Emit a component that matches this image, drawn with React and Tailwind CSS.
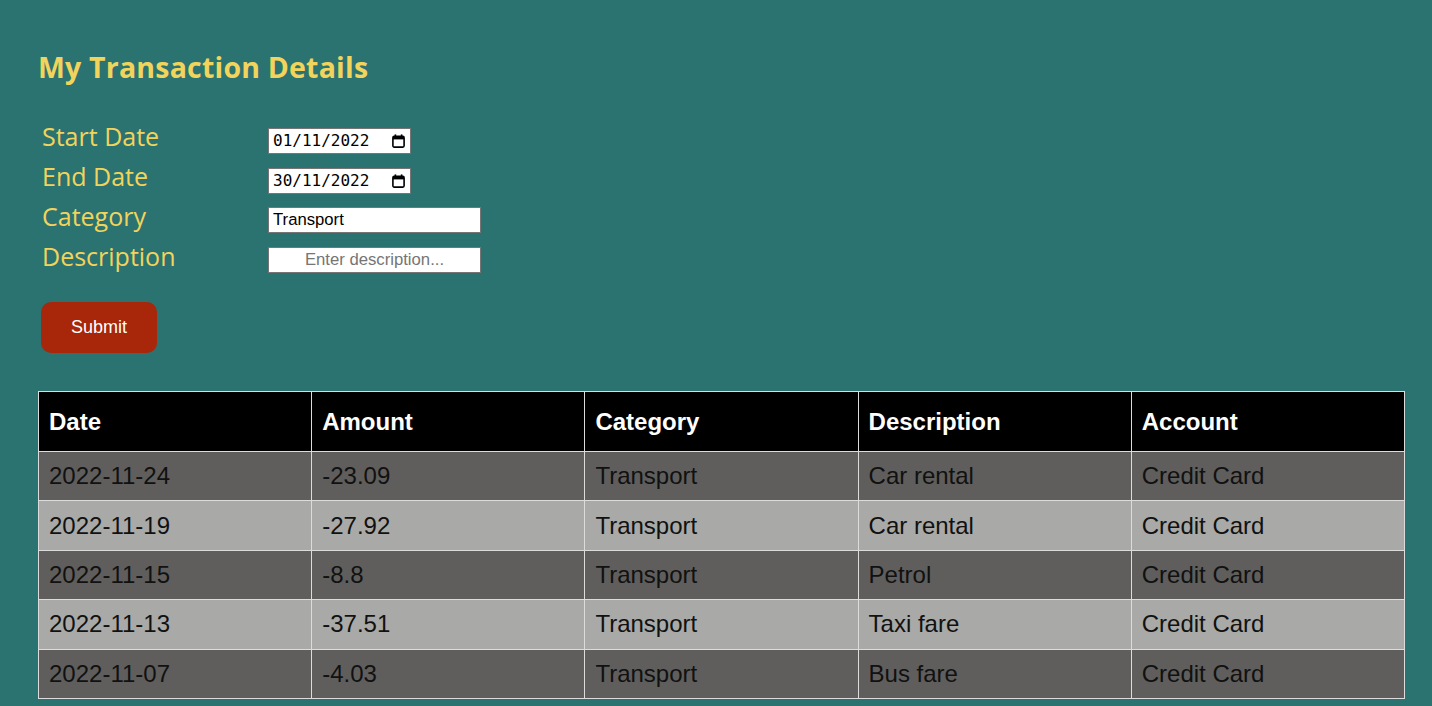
import React from "react";

const rows = [
  ["2022-11-24", "-23.09", "Transport", "Car rental", "Credit Card"],
  ["2022-11-19", "-27.92", "Transport", "Car rental", "Credit Card"],
  ["2022-11-15", "-8.8", "Transport", "Petrol", "Credit Card"],
  ["2022-11-13", "-37.51", "Transport", "Taxi fare", "Credit Card"],
  ["2022-11-07", "-4.03", "Transport", "Bus fare", "Credit Card"],
];

function CalIcon() {
  return (
    <svg width="13" height="14" viewBox="0 0 13 14" className="shrink-0">
      <rect x="0.9" y="2.4" width="11.2" height="10.7" rx="1.3" fill="none" stroke="#000" strokeWidth="1.6" />
      <rect x="1" y="2.4" width="11" height="3" fill="#000" />
      <rect x="2.6" y="0.4" width="1.6" height="3" fill="#000" />
      <rect x="8.8" y="0.4" width="1.6" height="3" fill="#000" />
    </svg>
  );
}

function DateBox({ value }) {
  return (
    <div className="flex items-center justify-between w-[143px] h-[26px] bg-white border border-[#767676] pl-[4px] pr-[5px] text-[16px] text-black" style={{ fontFamily: '"DejaVu Sans Mono", "Liberation Mono", monospace' }}>
      <span className="leading-[16px]">{value}</span>
      <CalIcon />
    </div>
  );
}

export default function App() {
  const labelFont = { fontFamily: '"Open Sans", "Noto Sans", sans-serif' };
  return (
    <div className="min-h-[706px] bg-[#2a7371] pl-[38px] pt-[46px] pb-[8px]" style={{ fontFamily: '"Liberation Sans", Arial, sans-serif' }}>
      <h1 className="text-[28.5px] font-bold leading-[42px] text-[#f2d45c] tracking-[0.2px]" style={{ fontFamily: '"Open Sans", "Noto Sans", sans-serif' }}>
        My Transaction Details
      </h1>
      <div className="mt-[29px] pl-[4px] grid grid-cols-[226px_auto] auto-rows-[40px] text-[#f2d45c] text-[25px]" style={labelFont}>
        <div className="leading-[40px] -mt-[1px]">Start Date</div>
        <div className="flex items-center pt-[8px]"><DateBox value="01/11/2022" /></div>
        <div className="leading-[40px] -mt-[1px]">End Date</div>
        <div className="flex items-center pt-[8px]"><DateBox value="30/11/2022" /></div>
        <div className="leading-[40px] -mt-[1px]">Category</div>
        <div className="flex items-center pt-[6px]">
          <input readOnly value="Transport" className="w-[213px] h-[26px] bg-white border border-[#767676] px-[4px] text-[16.7px] text-black outline-none" style={{ fontFamily: '"Liberation Sans", Arial, sans-serif' }} />
        </div>
        <div className="leading-[40px] -mt-[1px]">Description</div>
        <div className="flex items-center pt-[6px]">
          <input placeholder="Enter description..." className="w-[213px] h-[26px] bg-white border border-[#767676] px-[5px] text-[16.7px] text-center text-black placeholder:text-[#757575] outline-none" style={{ fontFamily: '"Liberation Sans", Arial, sans-serif' }} />
        </div>
      </div>
      <button className="mt-[25px] ml-[3px] w-[116px] h-[51px] rounded-[10px] bg-[#a8270a] text-white text-[18px]">
        Submit
      </button>
      <table className="mt-[38px] w-[1367px] table-fixed border-collapse border border-[#dcdcdc] text-[24px]">
        <thead>
          <tr className="bg-black text-white h-[60px]">
            {["Date", "Amount", "Category", "Description", "Account"].map((h) => (
              <th key={h} className="border border-[#dcdcdc] text-left font-bold px-[10px]">{h}</th>
            ))}
          </tr>
        </thead>
        <tbody>
          {rows.map((r, i) => (
            <tr key={i} className={i % 2 === 0 ? "bg-[#5f5e5c] h-[49.4px]" : "bg-[#a9a9a7] h-[49.4px]"}>
              {r.map((c, j) => (
                <td key={j} className="border border-[#dcdcdc] px-[10px] text-[#111]">{c}</td>
              ))}
            </tr>
          ))}
        </tbody>
      </table>
    </div>
  );
}
